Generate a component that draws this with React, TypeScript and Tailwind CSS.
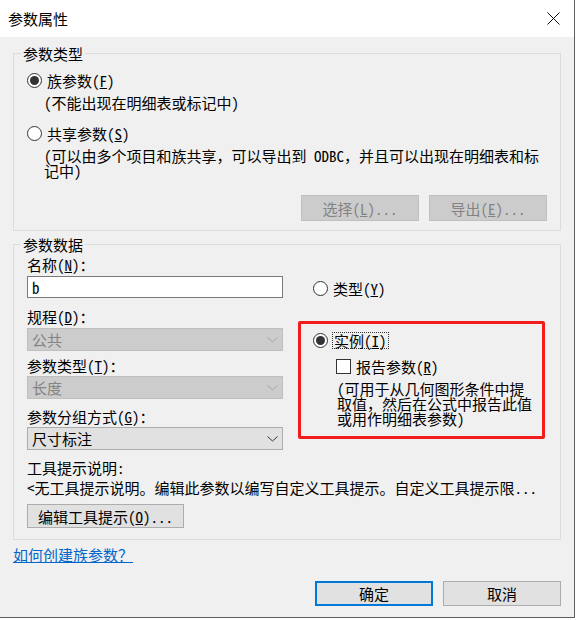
const font = "font-['Noto_Sans_Mono_CJK_SC','Noto_Sans_CJK_SC',sans-serif]"

function Radio({ checked }: { checked?: boolean }) {
  return (
    <span className="flex h-[15px] w-[15px] shrink-0 items-center justify-center rounded-full border border-[#333333] bg-white">
      {checked && <span className="h-[9px] w-[9px] rounded-full bg-[#333333]" />}
    </span>
  )
}

function Chevron({ disabled }: { disabled?: boolean }) {
  return (
    <svg width="11" height="6" viewBox="0 0 11 6" className="mr-[4px]">
      <path d="M0.5 0.5 L5.5 5 L10.5 0.5" fill="none" stroke={disabled ? '#a6a6a6' : '#333333'} strokeWidth="1" />
    </svg>
  )
}

function Select({ value, disabled }: { value: string; disabled?: boolean }) {
  return (
    <div
      className={
        disabled
          ? 'flex h-[23px] items-center justify-between border border-[#bfbfbf] bg-[#cccccc] pl-[4px] leading-[15px] text-[#838383]'
          : 'flex h-[23px] items-center justify-between border border-[#adadad] bg-[#e1e1e1] pl-[4px] leading-[15px] text-black'
      }
    >
      <span>{value}</span>
      <Chevron disabled={disabled} />
    </div>
  )
}

export default function App() {
  return (
    <div className={`w-[575px] border-r border-b border-[#5f5f5f] bg-[#f0f0f0] text-[15px] text-black ${font}`}>
      {/* title bar */}
      <div className="flex h-[37px] items-center justify-between bg-white pl-[8px] pr-[14px]">
        <span className="font-['Noto_Sans_CJK_SC',sans-serif] leading-[15px]">参数属性</span>
        <svg width="13" height="13" viewBox="0 0 13 13">
          <path d="M0.5 0.5 L12.5 12.5 M12.5 0.5 L0.5 12.5" stroke="#111111" strokeWidth="1" />
        </svg>
      </div>

      <div className="px-[13px] pb-[11px]">
        {/* 参数类型 */}
        <fieldset className="mt-[9px] border border-[#dcdcdc] px-[13px] pb-[9px]">
          <legend className="ml-[-6px] px-[2px] leading-[15px]">参数类型</legend>
          <div className="mt-[12px] flex items-center gap-[5px] leading-[15px]">
            <Radio checked />
            <span>
              族参数(<u>F</u>)
            </span>
          </div>
          <div className="mt-[7px] pl-[17px] leading-[15px]">(不能出现在明细表或标记中)</div>
          <div className="mt-[16px] flex items-center gap-[5px] leading-[15px]">
            <Radio />
            <span>
              共享参数(<u>S</u>)
            </span>
          </div>
          <div className="mt-[7px] pl-[17px] leading-[15px]">
            (可以由多个项目和族共享，可以导出到 ODBC，并且可以出现在明细表和标
            <br />
            记中)
          </div>
          <div className="mt-[17px] flex justify-end gap-[10px]">
            <div className="flex h-[26px] w-[118px] items-center justify-center border border-[#bfbfbf] bg-[#cccccc] leading-[15px] text-[#838383]">
              选择(<u>L</u>)...
            </div>
            <div className="flex h-[26px] w-[118px] items-center justify-center border border-[#bfbfbf] bg-[#cccccc] leading-[15px] text-[#838383]">
              导出(<u>E</u>)...
            </div>
          </div>
        </fieldset>

        {/* 参数数据 */}
        <fieldset className="mt-[6px] border border-[#dcdcdc] px-[13px] pb-[11px]">
          <legend className="ml-[-6px] px-[2px] leading-[15px]">参数数据</legend>
          <div className="grid grid-cols-[256px_247px] gap-x-[15px]">
            <div className="flex flex-col">
              <div className="mt-[5px] leading-[15px]">
                名称(<u>N</u>)：
              </div>
              <div className="mt-[4px] flex h-[22px] items-center border border-[#7a7a7a] bg-white pl-[4px] leading-[15px]">
                b
              </div>
              <div className="mt-[11px] leading-[15px]">
                规程(<u>D</u>)：
              </div>
              <div className="mt-[4px]">
                <Select value="公共" disabled />
              </div>
              <div className="mt-[7px] leading-[15px]">
                参数类型(<u>T</u>)：
              </div>
              <div className="mt-[3px]">
                <Select value="长度" disabled />
              </div>
              <div className="mt-[10px] leading-[15px]">
                参数分组方式(<u>G</u>)：
              </div>
              <div className="mt-[3px]">
                <Select value="尺寸标注" />
              </div>
            </div>

            <div className="flex flex-col">
              <div className="mt-[29px] flex items-center gap-[5px] pl-[15px] leading-[15px]">
                <Radio />
                <span>
                  类型(<u>Y</u>)
                </span>
              </div>
              <div className="mt-[25px] rounded-[2px] border-[3px] border-[#f21c1c] pb-[10px] pl-[12px] pt-[8px]">
                <div className="flex items-center gap-[4px] leading-[15px]">
                  <Radio checked />
                  <span className="border border-dotted border-[#333333] px-[1px]">
                    实例(<u>I</u>)
                  </span>
                </div>
                <div className="mt-[10px] flex items-center gap-[5px] pl-[23px] leading-[15px]">
                  <span className="h-[15px] w-[15px] shrink-0 border border-[#333333] bg-white" />
                  <span>
                    报告参数(<u>R</u>)
                  </span>
                </div>
                <div className="mt-[7px] pl-[24px] leading-[15px]">
                  (可用于从几何图形条件中提
                  <br />
                  取值，然后在公式中报告此值
                  <br />
                  或用作明细表参数)
                </div>
              </div>
            </div>
          </div>
          <div className="mt-[10px] leading-[15px]">工具提示说明:</div>
          <div className="mt-[5px] leading-[15px]">
            &lt;无工具提示说明。编辑此参数以编写自定义工具提示。自定义工具提示限...
          </div>
          <div className="mt-[9px] flex h-[24px] w-[157px] items-center justify-center border border-[#adadad] bg-[#e1e1e1] leading-[15px]">
            编辑工具提示(<u>O</u>)...
          </div>
        </fieldset>

        <div className="mt-[7px] leading-[15px]">
          <span className="text-[#0066cc] underline">如何创建族参数？</span>
        </div>

        <div className="mt-[19px] flex justify-end gap-[10px]">
          <div className="flex h-[25px] w-[118px] items-center justify-center border-2 border-[#0078d7] bg-[#e1e1e1] leading-[15px]">
            确定
          </div>
          <div className="flex h-[25px] w-[118px] items-center justify-center border border-[#adadad] bg-[#e1e1e1] leading-[15px]">
            取消
          </div>
        </div>
      </div>
    </div>
  )
}
